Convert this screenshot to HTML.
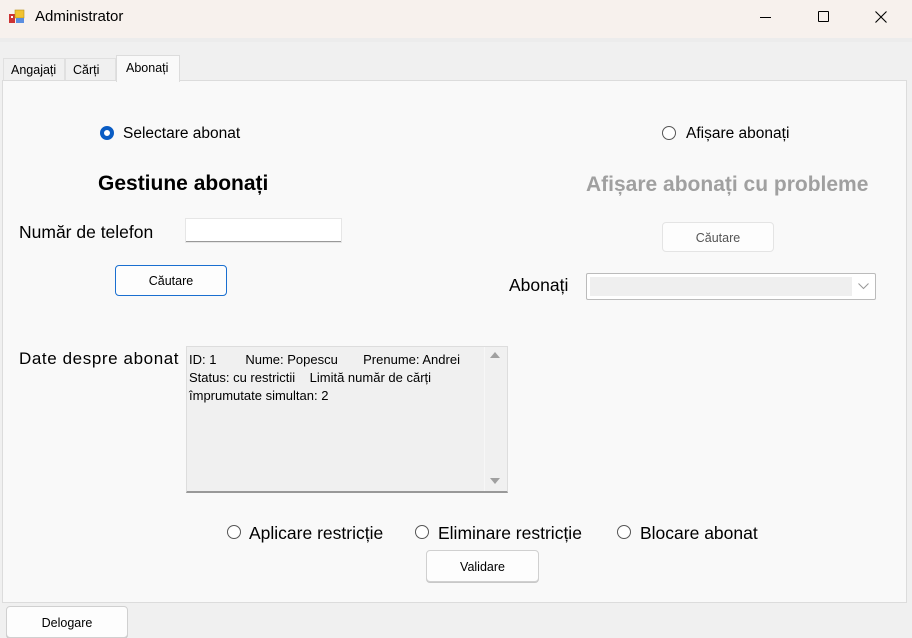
<!DOCTYPE html>
<html><head><meta charset="utf-8"><style>
*{box-sizing:border-box;margin:0;padding:0}
body{width:912px;height:638px;background:#f0f0f0;font-family:"Liberation Sans",sans-serif;position:relative;overflow:hidden;color:#000}
.a{position:absolute;white-space:nowrap}
.t{font-size:12px}
.btn{position:absolute;background:#fdfdfd;border:1px solid #d0d0d0;border-radius:4px;font-size:12.5px;text-align:center;box-shadow:0 1px 0 #c8c8c8}
.rad{position:absolute;width:14px;height:14px;border:1px solid #555;border-radius:50%;background:#fff}
</style></head><body>
<div class="a" style="left:0;top:0;width:912px;height:38px;background:#f7f1ed"></div>
<svg class="a" style="left:9px;top:9px" width="18" height="16" viewBox="0 0 18 16"><rect x="0" y="5" width="6" height="9" fill="#c33"/><rect x="2" y="7" width="2" height="2" fill="#fff"/><rect x="6" y="1" width="9" height="8" fill="#f2c230" stroke="#b8901a" stroke-width=".6"/><rect x="7" y="9" width="8" height="5" fill="#5a8ee0"/></svg>
<div class="a" style="left:35px;top:8px;font-size:15px">Administrator</div>
<div class="a" style="left:760px;top:17px;width:11px;height:1px;background:#000"></div>
<div class="a" style="left:818px;top:11px;width:11px;height:11px;border:1px solid #000;border-radius:1px"></div>
<svg class="a" style="left:875px;top:11px" width="12" height="12"><path d="M0.5 0.5L11.5 11.5M11.5 0.5L0.5 11.5" stroke="#000" stroke-width="1.1"/></svg>
<div class="a" style="left:0;top:38px;width:912px;height:4px;background:#ececec"></div>
<div class="a t" style="left:3px;top:58px;width:62px;height:23px;background:#f0f0f0;border:1px solid #e0e0e0;padding:4px 0 0 7px;font-size:12.5px">Angajați</div>
<div class="a t" style="left:65px;top:58px;width:51px;height:23px;background:#f0f0f0;border:1px solid #e0e0e0;padding:4px 0 0 7px;font-size:12.5px">Cărți</div>
<div class="a t" style="left:116px;top:55px;width:64px;height:27px;background:#f9f9f9;border:1px solid #dcdcdc;border-bottom:none;padding:5px 0 0 9px;z-index:2;font-size:12.5px">Abonați</div>
<div class="a" style="left:2px;top:80px;width:905px;height:523px;background:#f9f9f9;border:1px solid #dcdcdc"></div>
<div class="rad" style="left:100px;top:126px;border:4px solid #0a5cc4"></div>
<div class="a" style="left:123px;top:125px;font-size:15.5px">Selectare abonat</div>
<div class="a" style="left:98px;top:172px;font-size:21px;font-weight:bold">Gestiune abonați</div>
<div class="a" style="left:19px;top:222px;font-size:17.5px">Număr de telefon</div>
<div class="a" style="left:186px;top:219px;width:155px;height:23px;background:#fff;border-bottom:1px solid #999;box-shadow:0 0 0 1px #e6e6e6"></div>
<div class="btn" style="left:115px;top:265px;width:112px;height:31px;border:1px solid #1a6fd0;padding-top:8px;box-shadow:none">Căutare</div>
<div class="a" style="left:19px;top:349px;font-size:17px;letter-spacing:0.6px">Date despre abonat</div>
<div class="a" style="left:186px;top:346px;width:322px;height:147px;background:#f0f0f0;border:1px solid #ddd;border-bottom:2px solid #999"></div>
<div class="a" style="left:484px;top:347px;width:23px;height:144px;background:#f0f0f0;border-left:1px solid #f7f7f7"></div>
<div class="a" style="left:490px;top:352px;width:0;height:0;border:5px solid transparent;border-bottom:6px solid #a0a0a0;border-top:none"></div>
<div class="a" style="left:490px;top:478px;width:0;height:0;border:5px solid transparent;border-top:6px solid #a0a0a0;border-bottom:none"></div>
<div class="a" style="left:189px;top:351px;line-height:18px;white-space:pre;font-size:13px">ID: 1        Nume: Popescu       Prenume: Andrei
Status: cu restrictii    Limită număr de cărți
împrumutate simultan: 2</div>
<div class="rad" style="left:662px;top:126px"></div>
<div class="a" style="left:686px;top:125px;font-size:15.5px">Afișare abonați</div>
<div class="a" style="left:586px;top:173px;font-size:21px;font-weight:bold;color:#a0a0a0">Afișare abonați cu probleme</div>
<div class="btn" style="left:662px;top:222px;width:112px;height:30px;border-color:#e4e4e4;box-shadow:none;padding-top:8px;color:#555">Căutare</div>
<div class="a" style="left:509px;top:275px;font-size:17.5px">Abonați</div>
<div class="a" style="left:586px;top:273px;width:290px;height:27px;background:#fff;border:1px solid #bbb;border-radius:2px"></div>
<div class="a" style="left:590px;top:277px;width:262px;height:19px;background:#efefef"></div>
<svg class="a" style="left:858px;top:283px" width="11" height="7"><path d="M0.5 0.5L5.5 5.5L10.5 0.5" fill="none" stroke="#999"/></svg>
<div class="rad" style="left:227px;top:525px"></div>
<div class="a" style="left:249px;top:523px;font-size:17.5px">Aplicare restricție</div>
<div class="rad" style="left:415px;top:525px"></div>
<div class="a" style="left:438px;top:523px;font-size:17.5px">Eliminare restricție</div>
<div class="rad" style="left:617px;top:525px"></div>
<div class="a" style="left:640px;top:523px;font-size:17.5px">Blocare abonat</div>
<div class="btn" style="left:426px;top:550px;width:113px;height:32px;padding-top:9px">Validare</div>
<div class="btn" style="left:6px;top:606px;width:122px;height:32px;padding-top:9px">Delogare</div>
</body></html>
